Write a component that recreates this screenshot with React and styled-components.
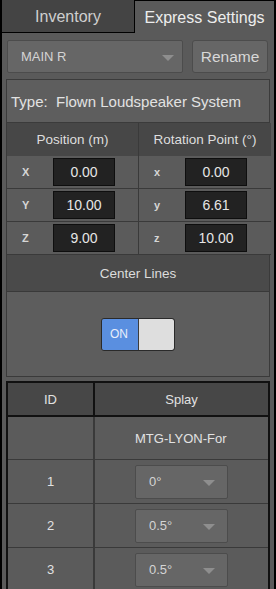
import React from "react";
import styled, { createGlobalStyle } from "styled-components";

const GlobalStyle = createGlobalStyle`
  html, body {
    margin: 0;
    padding: 0;
    background: #5a5a5a;
  }
  body {
    font-family: "Liberation Sans", Arial, sans-serif;
  }
  * {
    box-sizing: border-box;
  }
`;

const Frame = styled.div`
  width: 276px;
  height: 589px;
  overflow: hidden;
  background: #5a5a5a;
  border-left: 2px solid #000;
  border-right: 2px solid #000;
  display: flex;
  flex-direction: column;
`;

const TabBar = styled.div`
  display: flex;
  height: 33px;
  flex-shrink: 0;
`;

const Tab = styled.div`
  display: flex;
  align-items: center;
  justify-content: center;
  padding-top: 2px;
  font-size: 16px;
  color: ${(p) => (p.active ? "#ededed" : "#cfcfcf")};
  background: ${(p) => (p.active ? "#5a5a5a" : "#444444")};
  width: ${(p) => (p.active ? "auto" : "133px")};
  flex: ${(p) => (p.active ? 1 : "none")};
  border-top: ${(p) => (p.active ? "1px solid #000" : "none")};
  border-right: ${(p) => (p.active ? "none" : "1px solid #000")};
  border-bottom: ${(p) => (p.active ? "none" : "1px solid #000")};
`;

const Body = styled.div`
  display: flex;
  flex-direction: column;
  padding: 7px 4px 0 4px;
`;

const TopRow = styled.div`
  display: flex;
  gap: 9px;
  padding-left: 1px;
  height: 33px;
`;

const Select = styled.div`
  position: relative;
  display: flex;
  align-items: center;
  width: ${(p) => p.width}px;
  height: ${(p) => p.height}px;
  padding-left: ${(p) => p.pad}px;
  background: #666666;
  border: 1px solid #4c4c4c;
  border-radius: 2px;
  color: #d4d4d4;
  font-size: 13px;
`;

const Caret = styled.span`
  position: absolute;
  right: ${(p) => p.right}px;
  top: 50%;
  margin-top: -2px;
  width: 0;
  height: 0;
  border-left: 6px solid transparent;
  border-right: 6px solid transparent;
  border-top: 6px solid #8e8e8e;
`;

const Button = styled.div`
  display: flex;
  align-items: center;
  justify-content: center;
  width: 76px;
  background: #666666;
  border: 1px solid #4c4c4c;
  border-radius: 3px;
  color: #d8d8d8;
  font-size: 15.5px;
`;

const TypeBox = styled.div`
  display: flex;
  align-items: center;
  margin-top: 6px;
  height: 44px;
  padding-left: 4px;
  background: #5e5e5e;
  border: 1px solid #3b3b3b;
  color: #e2e2e2;
  font-size: 15px;
  white-space: pre;
`;

const CoordTable = styled.div`
  display: grid;
  grid-template-columns: 132px 132px;
  grid-auto-rows: 33px;
  border-left: 1px solid #3a3a3a;
  border-right: 1px solid #3a3a3a;
`;

const HeadCell = styled.div`
  display: flex;
  align-items: center;
  justify-content: center;
  height: 34px;
  background: #474747;
  color: #dedede;
  font-size: 13.5px;
  border-bottom: 1px solid #3a3a3a;
  border-right: ${(p) => (p.last ? "none" : "1px solid #3a3a3a")};
`;

const CoordCell = styled.div`
  display: flex;
  align-items: center;
  background: #5b5b5b;
  border-bottom: 1px solid #3a3a3a;
  border-right: ${(p) => (p.last ? "none" : "1px solid #3a3a3a")};
`;

const AxisLabel = styled.span`
  width: 46px;
  padding-left: 15px;
  color: #d6d6d6;
  font-size: 11px;
  font-weight: bold;
`;

const ValueBox = styled.div`
  display: flex;
  align-items: center;
  justify-content: center;
  width: 62px;
  height: 28px;
  background: #222222;
  border: 1px solid #0e0e0e;
  color: #e6e6e6;
  font-size: 14px;
`;

const Section = styled.div`
  display: flex;
  flex-direction: column;
  border: 1px solid #3a3a3a;
  border-top: none;
`;

const SectionHeader = styled.div`
  display: flex;
  align-items: center;
  justify-content: center;
  height: 37px;
  background: #4a4a4a;
  border-bottom: 1px solid #393939;
  color: #dcdcdc;
  font-size: 13.5px;
`;

const SectionBody = styled.div`
  display: flex;
  align-items: center;
  justify-content: center;
  height: 84px;
  background: #5d5d5d;
`;

const Toggle = styled.div`
  display: flex;
  width: 74px;
  height: 33px;
  border: 1px solid #2a2a2a;
  border-radius: 3px;
  overflow: hidden;
`;

const ToggleOn = styled.div`
  display: flex;
  align-items: center;
  width: 37px;
  padding-left: 8px;
  background: #5a8fe0;
  color: #e8eefb;
  font-size: 12px;
  border-right: 1px solid #3d3d3d;
`;

const ToggleOff = styled.div`
  flex: 1;
  background: #dedede;
  border-radius: 0 2px 2px 0;
`;

const SplayTable = styled.div`
  display: grid;
  grid-template-columns: 87px 1fr;
  margin-top: 4px;
  border: 2px solid #111111;
  border-bottom: none;
`;

const SplayHead = styled.div`
  display: flex;
  align-items: center;
  justify-content: center;
  height: 34px;
  background: #474747;
  color: #e2e2e2;
  font-size: 13px;
  border-bottom: 2px solid #111111;
  border-right: ${(p) => (p.first ? "2px solid #111111" : "none")};
`;

const SplayCell = styled.div`
  display: flex;
  align-items: center;
  justify-content: center;
  height: ${(p) => p.h}px;
  background: #5b5b5b;
  color: #e2e2e2;
  font-size: 13px;
  border-bottom: 1px solid #3a3a3a;
  border-right: ${(p) => (p.first ? "2px solid #3a3a3a" : "none")};
`;

const ModelName = styled.span`
  display: block;
  width: 93px;
  overflow: hidden;
  white-space: nowrap;
`;

const coords = [
  ["X", "0.00", "x", "0.00"],
  ["Y", "10.00", "y", "6.61"],
  ["Z", "9.00", "z", "10.00"],
];

const splays = [
  ["1", "0°"],
  ["2", "0.5°"],
  ["3", "0.5°"],
];

export default function App() {
  return (
    <>
      <GlobalStyle />
      <Frame>
        <TabBar>
          <Tab>Inventory</Tab>
          <Tab active>Express Settings</Tab>
        </TabBar>
        <Body>
          <TopRow>
            <Select width={176} height={33} pad={13}>
              MAIN R
              <Caret right={8} />
            </Select>
            <Button>Rename</Button>
          </TopRow>
          <TypeBox>Type:  Flown Loudspeaker System</TypeBox>
          <CoordTable>
            <HeadCell>Position (m)</HeadCell>
            <HeadCell last>Rotation Point (°)</HeadCell>
            {coords.map(([a, av, b, bv]) => (
              <React.Fragment key={a}>
                <CoordCell>
                  <AxisLabel>{a}</AxisLabel>
                  <ValueBox>{av}</ValueBox>
                </CoordCell>
                <CoordCell last>
                  <AxisLabel>{b}</AxisLabel>
                  <ValueBox>{bv}</ValueBox>
                </CoordCell>
              </React.Fragment>
            ))}
          </CoordTable>
          <Section>
            <SectionHeader>Center Lines</SectionHeader>
            <SectionBody>
              <Toggle>
                <ToggleOn>ON</ToggleOn>
                <ToggleOff />
              </Toggle>
            </SectionBody>
          </Section>
          <SplayTable>
            <SplayHead first>ID</SplayHead>
            <SplayHead>Splay</SplayHead>
            <SplayCell first h={43} />
            <SplayCell h={43}>
              <ModelName>MTG-LYON-For</ModelName>
            </SplayCell>
            {splays.map(([id, v]) => (
              <React.Fragment key={id}>
                <SplayCell first h={44}>
                  {id}
                </SplayCell>
                <SplayCell h={44}>
                  <Select width={93} height={34} pad={13}>
                    {v}
                    <Caret right={12} />
                  </Select>
                </SplayCell>
              </React.Fragment>
            ))}
          </SplayTable>
        </Body>
      </Frame>
    </>
  );
}
